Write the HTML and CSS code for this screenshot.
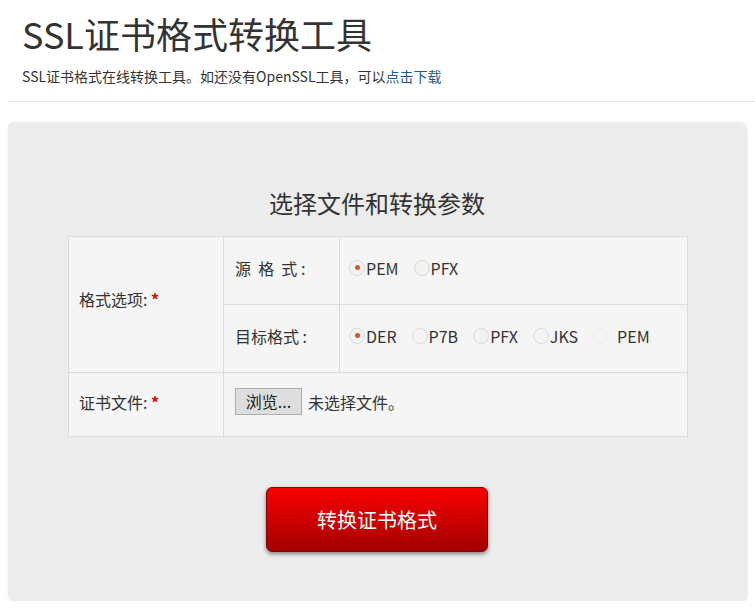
FILE: index.html
```html
<!DOCTYPE html>
<html lang="zh-CN">
<head>
<meta charset="utf-8">
<title>SSL证书格式转换工具</title>
<link rel="stylesheet" href="styles.css">
</head>
<body>
<div class="page">
  <header class="head">
    <h1 class="title">SSL证书格式转换工具</h1>
    <p class="sub">SSL证书格式在线转换工具。如还没有OpenSSL工具<span class="comma">，</span>可以<a class="dl" href="#">点击下载</a></p>
  </header>
  <hr class="rule">
  <section class="well">
    <h2 class="form-title">选择文件和转换参数</h2>
    <table class="opts">
      <tr class="r1">
        <td class="c1" rowspan="2">格式选项: <span class="req">*</span></td>
        <td class="c2">源&nbsp;&nbsp;格&nbsp;&nbsp;式&nbsp;:</td>
        <td class="c3">
          <div class="radios">
            <label class="rd"><span class="dot on"></span>PEM</label>
            <label class="rd"><span class="dot"></span>PFX</label>
          </div>
        </td>
      </tr>
      <tr class="r2">
        <td class="c2">目标格式&nbsp;:</td>
        <td class="c3">
          <div class="radios">
            <label class="rd"><span class="dot on"></span>DER</label>
            <label class="rd"><span class="dot"></span>P7B</label>
            <label class="rd"><span class="dot"></span>PFX</label>
            <label class="rd"><span class="dot"></span>JKS</label>
            <label class="rd"><span class="dot faint"></span>PEM</label>
          </div>
        </td>
      </tr>
      <tr class="r3">
        <td class="c1">证书文件: <span class="req">*</span></td>
        <td class="c23" colspan="2">
          <div class="file">
            <span class="browse">浏览...</span>
            <span class="nofile">未选择文件。</span>
          </div>
        </td>
      </tr>
    </table>
    <div class="actions">
      <button class="convert" type="button">转换证书格式</button>
    </div>
  </section>
</div>
</body>
</html>
```

FILE: styles.css
```css
html, body {
  margin: 0;
  padding: 0;
  background: #fff;
}
body {
  font-family: "Noto Sans CJK SC", "Open Sans", sans-serif;
  color: #333;
  width: 755px;
  overflow: hidden;
}
.page {
  padding-left: 8px;
}
.head {
  padding: 0 14px;
}
.title {
  margin: 13px 0 0;
  font-size: 36px;
  line-height: 40px;
  font-weight: 400;
  color: #333;
}
.sub {
  margin: 13px 0 0;
  font-size: 14px;
  line-height: 20px;
  color: #333;
}
.dl {
  color: #1e5b8e;
  text-decoration: none;
}
.rule {
  margin: 15px 0 0;
  border: 0;
  border-top: 1px solid #e6e6e6;
  height: 0;
}
.well {
  margin: 20px 9px 0 0;
  background: #ececec;
  border-radius: 6px;
  box-shadow: 1px 1px 3px rgba(0,0,0,0.12);
  padding: 65px 0 49px;
  display: flex;
  flex-direction: column;
  align-items: center;
}
.form-title {
  margin: 0 0 17px;
  font-size: 24px;
  line-height: 32px;
  font-weight: 400;
  color: #333;
}
.opts {
  width: 620px;
  border-collapse: collapse;
  background: #f5f5f5;
  font-size: 16px;
  margin-left: 2px;
}
.opts td {
  border: 1px solid #dcdcdc;
  padding: 0 0 6px 10px;
  vertical-align: middle;
}
.r1 td, .r2 td {
  height: 61px;
}
.r3 td {
  height: 57px;
}
.c1 {
  width: 144px;
}
td.c1[rowspan] {
  padding-bottom: 12px;
}
.c2 {
  width: 104px;
  padding-left: 11px !important;
}
.c3 {
  padding-left: 9px !important;
}
.c23 {
  padding-left: 11px !important;
}
.req {
  color: #e00;
  font-weight: 700;
}
.radios {
  display: flex;
  align-items: center;
  gap: 15px;
}
.rd {
  display: inline-flex;
  align-items: center;
}
.dot {
  width: 16px;
  height: 16px;
  border-radius: 50%;
  border: 1px solid #dadada;
  background: #f3f3f3;
  box-sizing: border-box;
  display: inline-flex;
  align-items: center;
  justify-content: center;
  margin-right: 1px;
}
.dot.on::after {
  content: "";
  width: 5px;
  height: 5px;
  border-radius: 50%;
  background: #d4552a;
}
.dot.faint {
  border-color: #ececec;
  margin-right: 8px;
}
.file {
  display: flex;
  align-items: center;
  gap: 6px;
}
.browse {
  display: inline-block;
  box-sizing: border-box;
  width: 67px;
  height: 27px;
  line-height: 25px;
  text-align: center;
  background: #dedede;
  border: 1px solid #adadad;
  color: #222;
}
.nofile {
  color: #333;
}
.actions {
  margin-top: 50px;
  display: flex;
  justify-content: center;
}
.convert {
  width: 222px;
  height: 65px;
  border: 1px solid #8c0000;
  border-radius: 6px;
  background: linear-gradient(#f80000, #a30000);
  box-shadow: 0 2px 4px rgba(0,0,0,0.45);
  color: #fff;
  font-family: "Noto Sans CJK SC", sans-serif;
  font-size: 20px;
  cursor: pointer;
}
```
